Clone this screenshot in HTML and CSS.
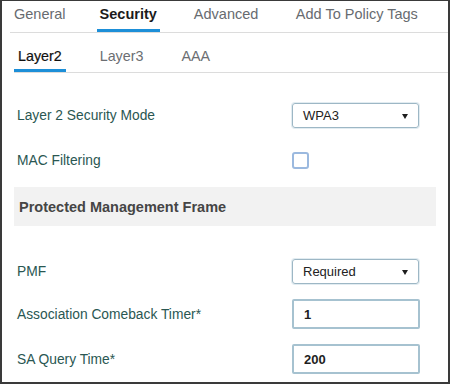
FILE: index.html
```html
<!DOCTYPE html>
<html lang="en">
<head>
    <meta charset="UTF-8">
    <meta name="viewport" content="width=device-width, initial-scale=1.0">
    <title>WLAN Security</title>
    <link rel="stylesheet" href="styles.css">
</head>
<body>
    <div class="panel">
        <div class="tabs">
            <span class="tab">General</span>
            <span class="tab active">Security</span>
            <span class="tab">Advanced</span>
            <span class="tab">Add To Policy Tags</span>
        </div>

        <div class="subtabs">
            <span class="subtab active">Layer2</span>
            <span class="subtab">Layer3</span>
            <span class="subtab">AAA</span>
        </div>

        <div class="form">
            <div class="form-row row-mode">
                <label class="form-label">Layer 2 Security Mode</label>
                <div class="select">
                    <span>WPA3</span>
                    <span class="caret"></span>
                </div>
            </div>

            <div class="form-row row-mac">
                <label class="form-label">MAC Filtering</label>
                <span class="checkbox"></span>
            </div>

            <div class="section-band">Protected Management Frame</div>

            <div class="form-row row-pmf">
                <label class="form-label">PMF</label>
                <div class="select">
                    <span>Required</span>
                    <span class="caret"></span>
                </div>
            </div>

            <div class="form-row row-timer">
                <label class="form-label">Association Comeback Timer*</label>
                <input class="text-input" type="text" value="1">
            </div>

            <div class="form-row row-query">
                <label class="form-label">SA Query Time*</label>
                <input class="text-input" type="text" value="200">
            </div>
        </div>
    </div>
</body>
</html>
```

FILE: styles.css
```css
* {
    margin: 0;
    padding: 0;
    box-sizing: border-box;
    font-family: 'Liberation Sans', Arial, sans-serif;
}

body {
    background-color: #ffffff;
    color: #333;
}

.panel {
    width: 450px;
    height: 384px;
    border: 2px solid #3a3a3a;
    border-top-width: 1px;
    background-color: #ffffff;
    overflow: hidden;
}

/* top tabs */
.tabs {
    display: flex;
    gap: 28px;
    margin-left: 8px;
    border-bottom: 1px solid #dcdcdc;
}

.tab {
    padding: 5px 3px 7px;
    font-size: 14.5px;
    line-height: 16px;
    color: #676b70;
    border-bottom: 3px solid transparent;
}

.tab:first-child {
    margin-left: 1px;
}

.tab:nth-child(3) {
    margin-left: 3px;
}

.tab:last-child {
    margin-left: 3.5px;
}

.tab.active {
    color: #1b1b1b;
    font-weight: bold;
    border-bottom-color: #1d8fd8;
}

/* sub tabs */
.subtabs {
    display: flex;
    gap: 30px;
    margin: 11px 0 0 12px;
    border-bottom: 1px solid #dcdcdc;
}

.subtab {
    padding: 4px 4px 5px;
    font-size: 14.3px;
    line-height: 16px;
    color: #6b6e72;
    border-bottom: 3px solid transparent;
}

.subtab.active {
    color: #111;
    border-bottom-color: #1d8fd8;
    -webkit-text-stroke: 0.2px #111;
}

/* form */
.form {
    display: flex;
    flex-direction: column;
}

.form-row {
    display: flex;
    align-items: center;
    padding-left: 15px;
}

.form-label {
    width: 275px;
    font-size: 13.8px;
    color: #2a5752;
}

.row-mode { margin-top: 30px; }
.row-mac { margin-top: 24px; }
.row-pmf { margin-top: 33px; }
.row-timer { margin-top: 15px; }
.row-query { margin-top: 15px; }

.select {
    width: 127px;
    height: 25px;
    display: flex;
    align-items: center;
    justify-content: space-between;
    padding: 0 10px 0 10px;
    border: 1px solid #9db7c5;
    border-radius: 3px;
    box-shadow: 0 0 0 1px #e2ecf1;
    font-size: 13px;
    color: #222;
}

.caret {
    width: 0;
    height: 0;
    border-left: 3.5px solid transparent;
    border-right: 3.5px solid transparent;
    border-top: 5px solid #1e1e1e;
    margin-top: 2px;
}

.checkbox {
    width: 17px;
    height: 17px;
    border: 2px solid #9bb9df;
    border-radius: 3px;
    background-color: #fff;
}

.section-band {
    margin: 18px 12px 0;
    height: 39px;
    display: flex;
    align-items: center;
    padding-left: 5px;
    background-color: #f2f2f2;
    font-size: 14.5px;
    font-weight: bold;
    color: #454545;
}

.text-input {
    width: 128px;
    height: 30px;
    padding: 0 10px;
    border: 2px solid #a6c2d0;
    border-radius: 2px;
    font-size: 13px;
    font-weight: bold;
    color: #1e1e1e;
    outline: none;
}
```
